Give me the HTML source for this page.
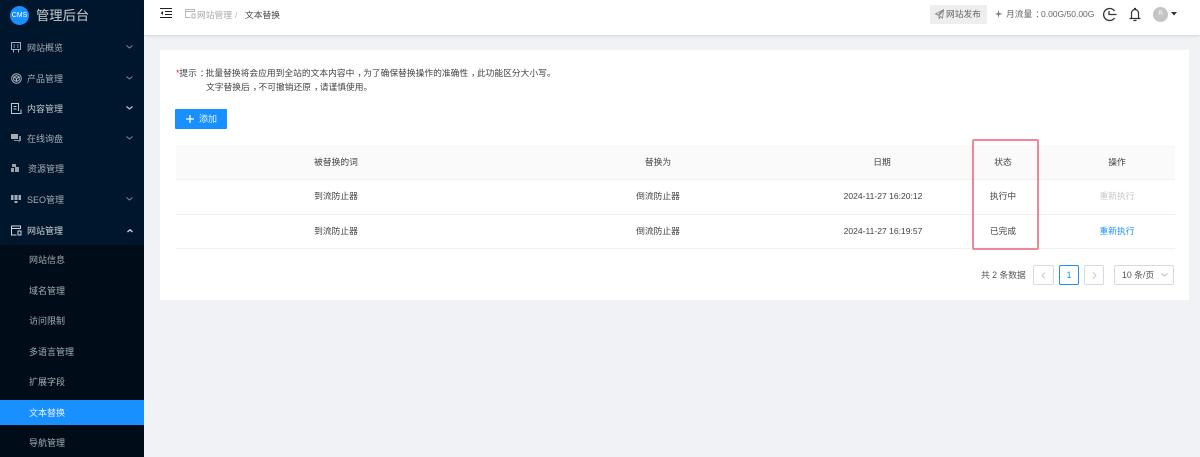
<!DOCTYPE html>
<html lang="zh-CN">
<head>
<meta charset="utf-8">
<title>管理后台</title>
<style>
*{box-sizing:border-box}
html,body{margin:0;padding:0;background:#f0f2f5}
body{width:1200px;height:457px;overflow:hidden;position:relative;font-family:"Liberation Sans","Noto Sans CJK SC",sans-serif;font-size:8.75px;color:#555}
#w{position:absolute;left:0;top:0;width:1200px;height:457px;overflow:hidden;background:#f0f2f5;filter:blur(.3px)}
.a{position:absolute;white-space:nowrap;line-height:12px}
.side{position:absolute;left:0;top:0;width:144px;height:457px;background:#00162c}
.sub{position:absolute;left:0;top:245px;width:144px;height:212px;background:#000c17}
.active{position:absolute;left:0;top:400px;width:144px;height:25px;background:#1890ff}
.m{color:#a6adb4;font-size:9px}
.top{position:absolute;left:144px;top:0;width:1056px;height:35px;background:#fff;box-shadow:0 1px 3px rgba(0,21,41,.12)}
.card{position:absolute;left:160px;top:50px;width:1029px;height:250px;background:#fff}
.th{position:absolute;left:176px;top:145px;width:999px;height:34px;background:#fafafa}
.ln{position:absolute;left:176px;width:999px;height:1px;background:#f0f0f0}
.c{transform:translateX(-50%);color:#444}
.d{font-size:8.55px}
.pg{position:absolute;top:265px;height:20px;border:1px solid #d9d9d9;border-radius:2px;background:#fff}
.p{position:relative;left:3px}
svg{position:absolute;overflow:visible}
</style>
</head>
<body>
<div id="w">
<div class="side"></div>
<div class="sub"></div>
<div class="active"></div>
<div class="a" style="left:10px;top:6px;width:19px;height:19px;border-radius:50%;background:#1890ff;color:#fff;font-size:7px;line-height:19px;text-align:center">CMS</div>
<div class="a" style="left:36px;top:7px;font-size:13.3px;line-height:17px;color:#c8ccd1">管理后台</div>

<svg style="left:11px;top:42px" width="11" height="11" viewBox="0 0 11 11" fill="none" stroke="#a6adb4" stroke-width="1"><path d="M.5.500h9v7h-9zM2.500 7.500v3M7.500 7.500v3M2.500 3h1.500M6 3h1.500M2.500 5h1.500M6 5h1.500"/></svg>
<div class="a m" style="left:27px;top:42px">网站概览</div>
<svg style="left:126px;top:45px" width="7" height="4" fill="none" stroke="#7f8a96"><path d="M.5.500L3.500 3 6.500.500"/></svg>

<svg style="left:11px;top:73px" width="11" height="11" viewBox="0 0 11 11" fill="none" stroke="#a6adb4"><circle cx="5.500" cy="5.500" r="4.800"/><path d="M5.500 2.500l2.800 1.500v3L5.500 8.500 2.700 7V4zM2.700 4l2.800 1.500L8.300 4M5.500 5.500v3"/></svg>
<div class="a m" style="left:27px;top:73px">产品管理</div>
<svg style="left:126px;top:76px" width="7" height="4" fill="none" stroke="#7f8a96"><path d="M.5.500L3.500 3 6.500.500"/></svg>

<svg style="left:11px;top:103px" width="11" height="11" viewBox="0 0 11 11" fill="none" stroke="#c4c8cd"><path d="M7.500 8V.5h-7v10h7M2.500 3.500h3M2.500 6h3M10 6.500v4H7.500"/></svg>
<div class="a m" style="left:27px;top:103px;color:#c4c8cd">内容管理</div>
<svg style="left:126px;top:106px" width="7" height="4" fill="none" stroke="#c4c8cd" stroke-width="1.200"><path d="M.5.500L3.500 3 6.500.500"/></svg>

<svg style="left:11px;top:134px" width="10" height="10" viewBox="0 0 10 10"><path d="M0 0h7v5H0z" fill="#a6adb4"/><path d="M8 2h2v5H8.500v1.500L7 7H3V6h5z" fill="#7f8a96"/></svg>
<div class="a m" style="left:27px;top:133px">在线询盘</div>
<svg style="left:126px;top:136px" width="7" height="4" fill="none" stroke="#7f8a96"><path d="M.5.500L3.500 3 6.500.500"/></svg>

<svg style="left:11px;top:164px" width="9" height="9" viewBox="0 0 9 9"><path d="M1 0h4v3H1zM0 4h3v4H0zM4 3h4v5H4z" fill="#98a0a8"/></svg>
<div class="a m" style="left:28px;top:163px">资源管理</div>

<svg style="left:11px;top:195px" width="11" height="8" viewBox="0 0 11 8"><path d="M0 0h10v5H0zM3.500 6h3v2h-3z" fill="#a6adb4"/><path d="M3 0v5M7 0v5" stroke="#00162c"/></svg>
<div class="a m" style="left:27px;top:194px">SEO管理</div>
<svg style="left:126px;top:197px" width="7" height="4" fill="none" stroke="#7f8a96"><path d="M.5.500L3.500 3 6.500.500"/></svg>

<svg style="left:11px;top:225px" width="11" height="11" viewBox="0 0 11 11" fill="none" stroke="#d5d8db"><path d="M9.500 4V1H.5v9h5M.5 3.500h9M7 6h3v4H7z"/></svg>
<div class="a m" style="left:27px;top:225px;color:#d5d8db">网站管理</div>
<svg style="left:127px;top:229px" width="6" height="4" fill="none" stroke="#d5d8db" stroke-width="1.300"><path d="M.5 3L3 .8 5.500 3"/></svg>

<div class="a m" style="left:29px;top:254px">网站信息</div>
<div class="a m" style="left:29px;top:285px">域名管理</div>
<div class="a m" style="left:29px;top:315px">访问限制</div>
<div class="a m" style="left:29px;top:346px">多语言管理</div>
<div class="a m" style="left:29px;top:376px">扩展字段</div>
<div class="a m" style="left:29px;top:407px;color:#e8f4ff">文本替换</div>
<div class="a m" style="left:29px;top:437px">导航管理</div>

<div class="top"></div>
<svg style="left:160px;top:8px" width="12" height="11" viewBox="0 0 12 11" fill="none" stroke="#222"><path d="M0 .5h12M5 3.500h7M5 6.500h7M0 9.500h12"/><path d="M3 3L.8 5 3 7z" fill="#222" stroke="none"/></svg>
<svg style="left:185px;top:9px" width="11" height="10" viewBox="0 0 11 10" fill="none" stroke="#b5b5b5"><path d="M9.500 3V.5H.5v8h5M.5 2.500h9M7 5h3v4H7z"/></svg>
<div class="a" style="left:197px;top:9px;color:#aaa">网站管理</div>
<div class="a" style="left:235px;top:9px;color:#bbb">/</div>
<div class="a" style="left:245px;top:9px;color:#444">文本替换</div>

<div class="a" style="left:930px;top:5px;width:57px;height:19px;background:#eee;border-radius:1px"></div>
<svg style="left:935px;top:9px" width="9" height="10" viewBox="0 0 9 10" fill="none" stroke="#888" stroke-width=".9"><path d="M8.500.8L.5 5l2.500 1.200L8.500.8 4 7v2.500L5.500 7.500 7.500 9z"/></svg>
<div class="a" style="left:946px;top:8px;color:#666">网站发布</div>
<svg style="left:995px;top:10px" width="8" height="8" viewBox="0 0 8 8"><path d="M3.500 0l.7 3L8 4 4.200 4.800 3.500 8 2.800 4.800 0 4 2.800 3z" fill="#777"/></svg>
<div class="a" style="left:1006px;top:8px;color:#666">月流量<span class="p">：</span><span style="font-size:8.5px">0.00G/50.00G</span></div>
<svg style="left:1102px;top:7px" width="15" height="15" viewBox="0 0 15 15" fill="none" stroke="#333" stroke-width="1.300"><path d="M12.500 4A6 6 0 1 0 12.500 11M7 4v3.500h2.500M9.500 7.500h5"/></svg>
<svg style="left:1129px;top:7px" width="12" height="15" viewBox="0 0 12 15" fill="none" stroke="#333" stroke-width="1.200"><path d="M.5 11.500h11M2.500 11.500V6a3.500 3.500 0 0 1 7 0v5.500M5 1.500h2M4.500 13.500h3"/></svg>
<div class="a" style="left:1153px;top:7px;width:15px;height:15px;border-radius:50%;background:#c4c4c4;color:#fff;font-size:6px;line-height:15px;text-align:center">R</div>
<svg style="left:1171px;top:12px" width="6" height="4"><path d="M0 0h6L3 3.500z" fill="#333"/></svg>

<div class="card"></div>
<div class="a" style="left:176px;top:67px;color:#444"><span style="color:#f5222d">*</span>提示<span class="p">：</span>批量替换将会应用到全站的文本内容中<span class="p">，</span>为了确保替换操作的准确性<span class="p">，</span>此功能区分大小写。</div>
<div class="a" style="left:206px;top:81px;color:#444">文字替换后<span class="p">，</span>不可撤销还原<span class="p">，</span>请谨慎使用。</div>

<div class="a" style="left:175px;top:109px;width:52px;height:20px;background:#1890ff;border-radius:1px"></div>
<svg style="left:186px;top:115px" width="8" height="8"><path d="M4 0v8M0 4h8" stroke="#fff" stroke-width="1.300"/></svg>
<div class="a" style="left:199px;top:113px;color:#e8f4ff;font-size:9px">添加</div>

<div class="th"></div>
<div class="ln" style="top:179px"></div>
<div class="ln" style="top:214px"></div>
<div class="ln" style="top:248px"></div>

<div class="a c" style="left:336px;top:156px">被替换的词</div>
<div class="a c" style="left:658px;top:156px">替换为</div>
<div class="a c" style="left:882px;top:156px">日期</div>
<div class="a c" style="left:1003px;top:156px">状态</div>
<div class="a c" style="left:1117px;top:156px">操作</div>

<div class="a c" style="left:336px;top:190px">到流防止器</div>
<div class="a c" style="left:658px;top:190px">倒流防止器</div>
<div class="a c d" style="left:883px;top:190px">2024-11-27 16:20:12</div>
<div class="a c" style="left:1003px;top:190px">执行中</div>
<div class="a c" style="left:1117px;top:190px;color:#c8c8c8">重新执行</div>

<div class="a c" style="left:336px;top:225px">到流防止器</div>
<div class="a c" style="left:658px;top:225px">倒流防止器</div>
<div class="a c d" style="left:883px;top:225px">2024-11-27 16:19:57</div>
<div class="a c" style="left:1003px;top:225px">已完成</div>
<div class="a c" style="left:1117px;top:225px;color:#1890ff">重新执行</div>

<div style="position:absolute;left:972px;top:139px;width:67px;height:111px;border:2px solid #ef8796;border-radius:2px"></div>

<div class="a" style="left:981px;top:269px">共 2 条数据</div>
<div class="pg" style="left:1033px;width:21px"></div>
<svg style="left:1041px;top:272px" width="5" height="7" fill="none" stroke="#c8c8c8"><path d="M4 .5L1 3.500 4 6.500"/></svg>
<div class="pg a" style="left:1059px;top:265px;width:20px;border-color:#1890ff;color:#1890ff;text-align:center;line-height:18px">1</div>
<div class="pg" style="left:1084px;width:20px"></div>
<svg style="left:1092px;top:272px" width="5" height="7" fill="none" stroke="#c8c8c8"><path d="M1 .5L4 3.500 1 6.500"/></svg>
<div class="pg" style="left:1114px;width:60px"></div>
<div class="a" style="left:1122px;top:269px">10 条/页</div>
<svg style="left:1161px;top:273px" width="7" height="4" fill="none" stroke="#bbb"><path d="M.5.500L3.500 3 6.500.500"/></svg>
</div>
</body>
</html>
